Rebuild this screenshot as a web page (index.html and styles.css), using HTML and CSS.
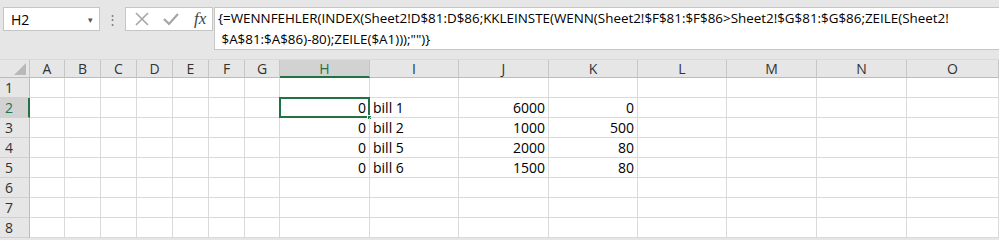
FILE: index.html
```
<!DOCTYPE html>
<html lang="de">
<head>
  <meta charset="UTF-8" />
  <title>Excel – Sheet1</title>
  <link rel="stylesheet" href="styles.css">
</head>
<body>
  <div class="toolbar">
    <div class="namebox">
      <span>H2</span>
      <span class="drop">&#9662;</span>
    </div>
    <div class="grip">&#8942;</div>
    <div class="fxbox">
      <svg width="16" height="16" viewBox="0 0 16 16"><path d="M2 2 L14 14 M14 2 L2 14" stroke="#a6a6a6" stroke-width="1.6" fill="none"/></svg>
      <svg width="18" height="16" viewBox="0 0 18 16"><path d="M2 8 L7 13 L16 3" stroke="#a6a6a6" stroke-width="2.2" fill="none"/></svg>
      <span class="fx">fx</span>
    </div>
    <div class="formula">{=WENNFEHLER(INDEX(Sheet2!D$81:D$86;KKLEINSTE(WENN(Sheet2!$F$81:$F$86&gt;Sheet2!$G$81:$G$86;ZEILE(Sheet2!<br>&nbsp;$A$81:$A$86)-80);ZEILE($A1)));"")}</div>
  </div>

  <div class="sheet" id="sheet"></div>

  <script>
    const cols = ["A","B","C","D","E","F","G","H","I","J","K","L","M","N","O"];
    const data = {
      2: { H: "0", I: "bill 1", J: "6000", K: "0" },
      3: { H: "0", I: "bill 2", J: "1000", K: "500" },
      4: { H: "0", I: "bill 5", J: "2000", K: "80" },
      5: { H: "0", I: "bill 6", J: "1500", K: "80" }
    };
    const sheet = document.getElementById("sheet");

    let html = '<div class="corner"><span class="tri"></span></div>';
    cols.forEach(c => {
      html += `<div class="colhead${c === "H" ? " active" : ""}">${c}</div>`;
    });

    for (let r = 1; r <= 8; r++) {
      html += `<div class="rowhead${r === 2 ? " active" : ""}">${r}</div>`;
      cols.forEach(c => {
        const val = (data[r] && data[r][c]) || "";
        const cls = c === "I" ? "cell text" : "cell";
        const sel = (r === 2 && c === "H") ? '<span class="sel"><i></i></span>' : "";
        html += `<div class="${cls}">${val}${sel}</div>`;
      });
    }
    sheet.innerHTML = html;
  </script>
</body>
</html>
```

FILE: styles.css
```
* {
  margin: 0;
  padding: 0;
  box-sizing: border-box;
}

body {
  width: 999px;
  height: 240px;
  overflow: hidden;
  background: #e6e6e6;
  font-family: "Open Sans", "Liberation Sans", sans-serif;
  font-size: 13px;
  color: #000;
}

.toolbar {
  height: 60px;
  display: flex;
  align-items: flex-start;
  padding-top: 7px;
  padding-left: 3px;
  background: #e6e6e6;
  border-bottom: 1px solid #d9d9d9;
}

.namebox {
  width: 97px;
  height: 24px;
  background: #fff;
  border: 1px solid #c6c6c6;
  display: flex;
  align-items: center;
  justify-content: space-between;
  padding: 0 6px 0 7px;
  font-size: 14px;
}

.drop {
  font-size: 9px;
  color: #555;
}

.grip {
  width: 25px;
  height: 24px;
  text-align: center;
  line-height: 24px;
  color: #777;
  font-size: 13px;
}

.fxbox {
  width: 88px;
  height: 24px;
  background: #fff;
  border: 1px solid #c6c6c6;
  display: flex;
  align-items: center;
  gap: 12px;
  padding-left: 8px;
}

.fx {
  font-family: "Liberation Serif", serif;
  font-style: italic;
  font-size: 17px;
  color: #444;
  margin-left: 2px;
}

.formula {
  flex: 1;
  height: 43px;
  margin-left: 1px;
  background: #fff;
  border: 1px solid #c6c6c6;
  border-right: none;
  padding: 0 0 0 3px;
  line-height: 21px;
  font-size: 13.4px;
  white-space: nowrap;
}

.sheet {
  display: grid;
  grid-template-columns: 30px 35px 36px 36px 36px 36px 36px 35px 90px 89px 90px 89px 89px 90px 90px 92px;
  grid-template-rows: 18px repeat(8, 20px);
  background: #fff;
}

.corner {
  background: #e6e6e6;
  border-right: 1px solid #c6c6c6;
  border-bottom: 1px solid #bcbcbc;
  position: relative;
}

.tri {
  position: absolute;
  right: 3px;
  bottom: 2px;
  width: 0;
  height: 0;
  border-left: 12px solid transparent;
  border-bottom: 12px solid #b8b8b8;
}

.colhead {
  background: #e6e6e6;
  border-right: 1px solid #c6c6c6;
  border-bottom: 1px solid #bcbcbc;
  text-align: center;
  line-height: 17px;
  font-size: 14px;
  color: #333;
}

.colhead.active {
  background: #d2d2d2;
  color: #217346;
  border-bottom: 2px solid #217346;
}

.rowhead {
  background: #e6e6e6;
  border-right: 1px solid #bcbcbc;
  border-bottom: 1px solid #d0d0d0;
  padding-left: 5px;
  line-height: 20px;
  font-size: 14px;
  color: #333;
}

.rowhead.active {
  background: #d2d2d2;
  color: #217346;
  border-right: 2px solid #217346;
}

.cell {
  position: relative;
  border-right: 1px solid #dadada;
  border-bottom: 1px solid #dadada;
  text-align: right;
  padding-right: 3px;
  line-height: 20px;
  font-size: 14px;
}

.cell.text {
  text-align: left;
  padding-left: 3px;
}

.sel {
  position: absolute;
  left: -1px;
  top: -1px;
  right: -1px;
  bottom: -1px;
  border: 2px solid #217346;
}

.sel i {
  position: absolute;
  right: -4px;
  bottom: -4px;
  width: 5px;
  height: 5px;
  background: #217346;
  border: 1px solid #fff;
}
```
